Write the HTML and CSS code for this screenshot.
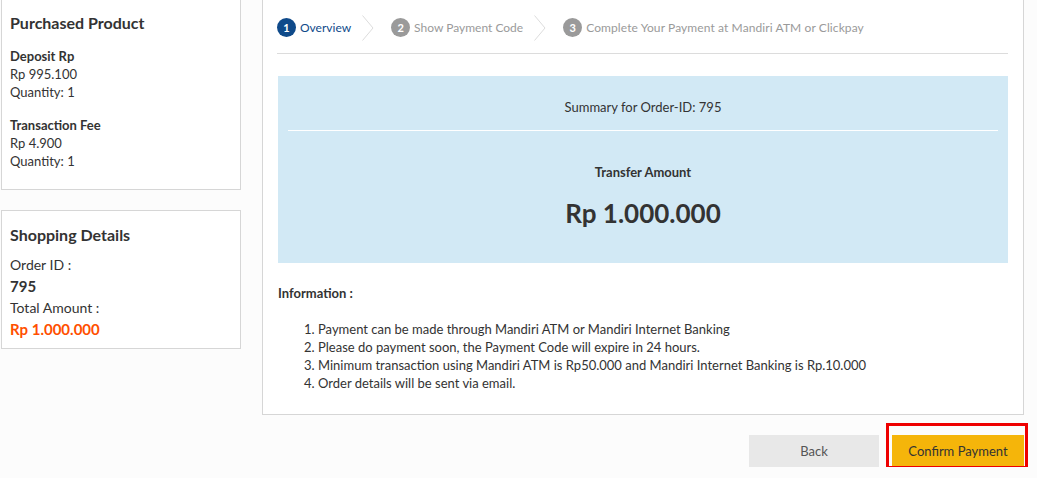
FILE: index.html
```html
<!DOCTYPE html>
<html lang="en">
<head>
<meta charset="utf-8">
<title>Payment Overview</title>
<link rel="stylesheet" href="styles.css">
</head>
<body>
<div class="page">
  <aside class="sidebar">
    <section class="card card-product">
      <h2 class="card-title">Purchased Product</h2>
      <div class="item">
        <div class="item-name">Deposit Rp</div>
        <div>Rp 995.100</div>
        <div>Quantity: 1</div>
      </div>
      <div class="item">
        <div class="item-name">Transaction Fee</div>
        <div>Rp 4.900</div>
        <div>Quantity: 1</div>
      </div>
    </section>
    <section class="card card-shop">
      <h2 class="card-title">Shopping Details</h2>
      <div class="detail-label">Order ID :</div>
      <div class="detail-value">795</div>
      <div class="detail-label">Total Amount :</div>
      <div class="detail-value total">Rp 1.000.000</div>
    </section>
  </aside>

  <main class="main">
    <div class="panel">
      <nav class="stepper">
        <div class="step active"><span class="num">1</span><span class="label">Overview</span></div>
        <svg class="chev" width="12" height="26" viewBox="0 0 12 26"><polyline points="0.5,0.5 11,13 0.5,25.5" fill="none" stroke="#dcdcdc" stroke-width="1"/></svg>
        <div class="step"><span class="num">2</span><span class="label">Show Payment Code</span></div>
        <svg class="chev" width="12" height="26" viewBox="0 0 12 26"><polyline points="0.5,0.5 11,13 0.5,25.5" fill="none" stroke="#dcdcdc" stroke-width="1"/></svg>
        <div class="step"><span class="num">3</span><span class="label label-long">Complete Your Payment at Mandiri ATM or Clickpay</span></div>
      </nav>

      <div class="summary">
        <div class="summary-head">Summary for Order-ID: 795</div>
        <div class="summary-body">
          <div class="transfer-label">Transfer Amount</div>
          <div class="transfer-amount">Rp 1.000.000</div>
        </div>
      </div>

      <div class="info">
        <div class="info-title">Information :</div>
        <ol class="info-list">
          <li>Payment can be made through Mandiri ATM or Mandiri Internet Banking</li>
          <li>Please do payment soon, the Payment Code will expire in 24 hours.</li>
          <li>Minimum transaction using Mandiri ATM is Rp50.000 and Mandiri Internet Banking is Rp.10.000</li>
          <li>Order details will be sent via email.</li>
        </ol>
      </div>
    </div>

    <div class="actions">
      <button class="btn btn-back" type="button">Back</button>
      <div class="highlight">
        <button class="btn btn-confirm" type="button">Confirm Payment</button>
      </div>
    </div>
  </main>
</div>
</body>
</html>
```

FILE: styles.css
```css
* { box-sizing: border-box; }

html, body {
  margin: 0;
  padding: 0;
  background: #fcfcfc;
  font-family: Lato, "Open Sans", "Liberation Sans", sans-serif;
  color: #333;
  font-size: 13px;
}

.page {
  display: flex;
  align-items: flex-start;
  gap: 21px;
  padding-left: 1px;
  margin-top: -12px;
  width: 1024px;
}

.sidebar {
  width: 240px;
  flex: none;
  display: flex;
  flex-direction: column;
  gap: 20px;
}

.card {
  background: #fff;
  border: 1px solid #d6d6d6;
  padding: 0 8px;
}

.card-title {
  margin: 0;
  font-size: 16px;
  line-height: 22px;
  font-weight: 700;
  color: #333;
}

.card-product {
  padding-top: 23px;
  padding-bottom: 19px;
}

.card-product .card-title { margin-bottom: 13px; }

.item { line-height: 18px; font-size: 13px; }
.item + .item { margin-top: 15px; }
.item-name { font-weight: 700; }

.card-shop {
  padding-top: 13px;
  padding-bottom: 8px;
}

.card-shop .card-title { margin-bottom: 8px; }

.detail-label {
  font-size: 14px;
  line-height: 21.5px;
}

.detail-value {
  font-size: 15px;
  line-height: 21.5px;
  font-weight: 700;
}

.detail-value.total { color: #ff4f00; }

.main {
  width: 762px;
  flex: none;
  display: flex;
  flex-direction: column;
}

.panel {
  background: #fff;
  border: 1px solid #d6d6d6;
  padding: 0 15px 22px;
}

.stepper {
  display: flex;
  align-items: center;
  padding-top: 28px;
  padding-bottom: 15px;
  border-bottom: 1px solid #dcdcdc;
  height: 65px;
  margin: 0 0 0 -1px;
}

.step {
  display: flex;
  align-items: center;
  gap: 4px;
  color: #9a9a9a;
  font-size: 12px;
}

.step .label-long { letter-spacing: 0.1px; }

.step .num {
  width: 19px;
  height: 19px;
  border-radius: 50%;
  background: #9a9a9a;
  color: #fff;
  font-size: 11px;
  font-weight: 700;
  display: flex;
  align-items: center;
  justify-content: center;
}

.step.active { color: #0f4a8a; }
.step.active .num { background: #0f4a8a; }

.chev {
  display: block;
  margin: 0 17px 0 11px;
}

.summary {
  margin-top: 22px;
  background: #d2e9f5;
  padding: 22px 10px 34px;
  text-align: center;
}

.summary-head {
  line-height: 18px;
  padding-bottom: 14px;
  border-bottom: 1px solid #fff;
}

.summary-body { padding-top: 32px; }

.transfer-label {
  font-weight: 700;
  line-height: 18px;
}

.transfer-amount {
  margin-top: 16px;
  font-size: 26px;
  line-height: 32px;
  font-weight: 700;
}

.info { margin-top: 21px; }

.info-title {
  font-size: 13px;
  font-weight: 700;
  line-height: 18px;
}

.info-list {
  margin: 18px 0 0;
  padding-left: 40px;
  line-height: 18px;
  font-size: 13px;
}

.actions {
  display: flex;
  justify-content: flex-end;
  align-items: flex-start;
  gap: 13px;
  margin-top: 20px;
}

.btn {
  display: block;
  font-family: inherit;
  font-size: 13px;
  height: 32px;
  border: none;
  border-radius: 0;
  padding: 0;
  margin: 0;
  cursor: pointer;
}

.btn-back {
  width: 130px;
  background: #e8e8e8;
  color: #555;
}

.btn-confirm {
  width: 132px;
  background: #f5b50a;
  color: #333;
}

.highlight {
  position: relative;
}

.highlight::after {
  content: "";
  position: absolute;
  top: -12px;
  left: -6px;
  right: -4px;
  bottom: -2px;
  border: 3px solid #ee0000;
  pointer-events: none;
}
```
